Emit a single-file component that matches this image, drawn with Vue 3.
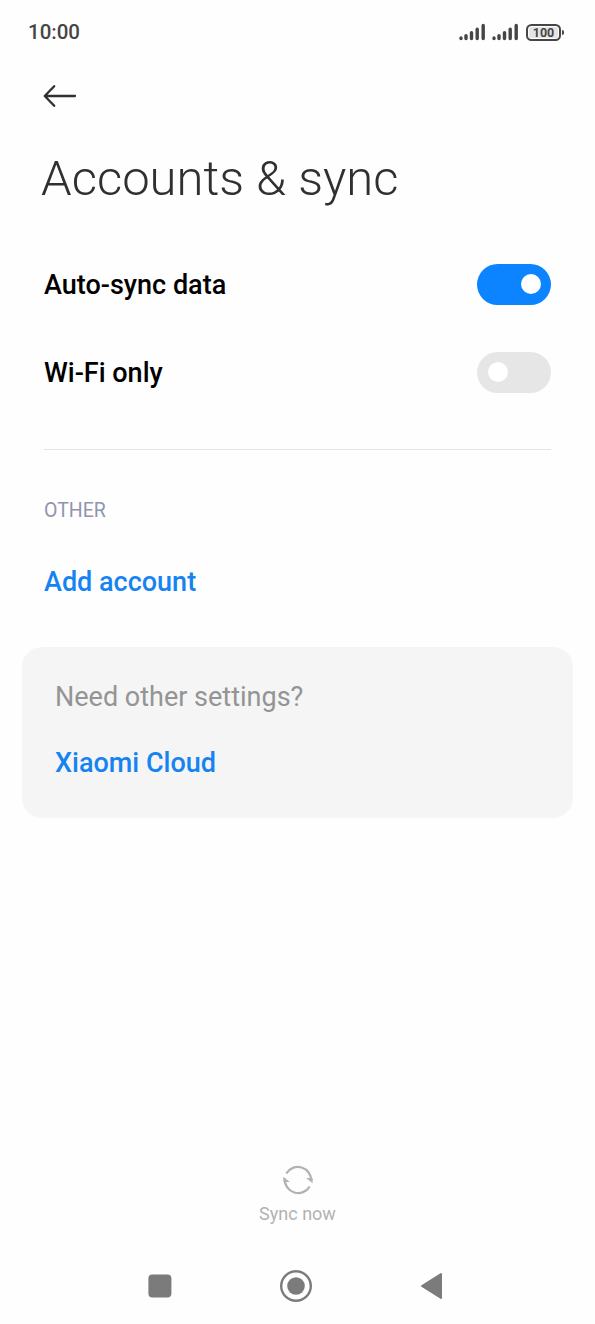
<script setup>
import { ref } from 'vue'

const settings = ref([
  { label: 'Auto-sync data', on: true },
  { label: 'Wi-Fi only', on: false },
])
</script>

<template>
  <div class="screen">
    <header class="status">
      <span class="clock">10:00</span>
      <div class="indicators">
        <svg v-for="n in 2" :key="n" class="signal" width="27" height="18" viewBox="0 0 27 18">
          <path
            d="M2 15.5V14.9M7 15.5V12.6M12.5 15.5V9.6M18.2 15.5V6.2M24.2 15.5V2.4"
            fill="none" stroke="#454545" stroke-width="3.4" stroke-linecap="round"
          />
        </svg>
        <div class="battery"><span class="level">100</span></div>
      </div>
    </header>

    <nav class="toolbar">
      <svg width="34" height="24" viewBox="0 0 34 24">
        <path
          d="M32 12H2M11.2 2.2L1.7 12L11.2 21.8"
          fill="none" stroke="#303030" stroke-width="2.3" stroke-linecap="round" stroke-linejoin="round"
        />
      </svg>
    </nav>

    <h1 class="title">Accounts &amp; sync</h1>

    <main>
      <div v-for="item in settings" :key="item.label" class="row" @click="item.on = !item.on">
        <span class="label">{{ item.label }}</span>
        <span class="toggle" :class="{ on: item.on }"><span class="knob"></span></span>
      </div>
      <div class="divider"></div>
      <div class="section">OTHER</div>
      <div class="add">Add account</div>
      <section class="card">
        <div class="question">Need other settings?</div>
        <div class="cloud">Xiaomi Cloud</div>
      </section>
    </main>

    <div class="sync">
      <svg width="32" height="32" viewBox="0 0 32 32">
        <g fill="none" stroke="#b2b2b2" stroke-width="2.3">
          <path d="M4.3 9.5A13.4 13.4 0 0 1 29.2 17" />
          <path d="M27.7 22.5A13.4 13.4 0 0 1 2.8 15" />
        </g>
        <path d="M24.2 14H30.6V19.2Z" fill="#b2b2b2" />
        <path d="M7.8 18H1.4V12.8Z" fill="#b2b2b2" />
      </svg>
      <span class="sync-label">Sync now</span>
    </div>

    <footer class="navbar">
      <svg width="24" height="24" viewBox="0 0 24 24"><rect x="0.4" y="0.4" width="23" height="23" rx="4" fill="#7b7b7b" /></svg>
      <svg width="34" height="34" viewBox="0 0 34 34">
        <circle cx="17" cy="17" r="14.8" fill="none" stroke="#7b7b7b" stroke-width="2.4" />
        <circle cx="17" cy="17" r="8.8" fill="#7b7b7b" />
      </svg>
      <svg width="23" height="28" viewBox="0 0 23 28">
        <path d="M2 14L21 2V26Z" fill="#7b7b7b" stroke="#7b7b7b" stroke-width="2" stroke-linejoin="round" />
      </svg>
    </footer>
  </div>
</template>

<style>
body {
  background: #fefefe;
}
</style>

<style scoped>
.screen {
  box-sizing: border-box;
  display: flex;
  flex-direction: column;
  height: 1324px;
  font-family: Roboto, "Liberation Sans", sans-serif;
  background: #fefefe;
}
.status {
  display: flex;
  justify-content: space-between;
  align-items: center;
  height: 64px;
  padding: 0 31px 0 28px;
}
.clock {
  font-size: 20.5px;
  font-weight: 500;
  color: #454545;
}
.indicators {
  display: flex;
  align-items: center;
}
.signal {
  margin-right: 6px;
}
.battery {
  position: relative;
  box-sizing: border-box;
  width: 35px;
  height: 17px;
  margin: 0 3px 0 1px;
  border: 2px solid #454545;
  border-radius: 5.5px;
  padding: 1px;
}
.battery::after {
  content: "";
  position: absolute;
  right: -4.5px;
  top: 4px;
  width: 2px;
  height: 5px;
  border-radius: 0 2px 2px 0;
  background: #454545;
}
.level {
  display: block;
  height: 11px;
  border-radius: 2px;
  background: #e4e4e4;
  color: #454545;
  font-size: 12.5px;
  font-weight: 700;
  line-height: 11px;
  text-align: center;
}
.toolbar {
  display: flex;
  align-items: center;
  height: 64px;
  padding-left: 43px;
}
.title {
  height: 100px;
  margin: 0 0 12px;
  padding-left: 41px;
  font-size: 49px;
  font-weight: 300;
  line-height: 101px;
  color: #303030;
}
.row {
  display: flex;
  align-items: center;
  justify-content: space-between;
  height: 88px;
  padding: 0 44px;
}
.label {
  padding-top: 2px;
  font-size: 27px;
  font-weight: 500;
  color: #000;
}
.toggle {
  box-sizing: border-box;
  display: flex;
  width: 74px;
  height: 41px;
  padding: 10.5px;
  border-radius: 21px;
  background: #e6e6e6;
}
.toggle.on {
  justify-content: flex-end;
  background: #0d84ff;
}
.knob {
  width: 20px;
  height: 20px;
  border-radius: 50%;
  background: #fff;
}
.divider {
  height: 1px;
  margin: 33px 44px 0;
  background: #e4e4e4;
}
.section {
  padding: 48px 44px 0;
  font-size: 19.5px;
  line-height: 25px;
  color: #9094ae;
}
.add {
  padding: 42px 44px 0;
  font-size: 27px;
  font-weight: 500;
  line-height: 34px;
  color: #1683f2;
}
.card {
  box-sizing: border-box;
  height: 171px;
  margin: 48px 22px 0;
  padding: 33px;
  border-radius: 20px;
  background: #f5f5f5;
}
.question {
  font-size: 27px;
  line-height: 34px;
  color: #949494;
}
.cloud {
  margin-top: 32px;
  font-size: 27px;
  font-weight: 500;
  line-height: 34px;
  color: #1683f2;
}
.sync {
  display: flex;
  flex-direction: column;
  align-items: center;
  margin-top: auto;
}
.sync-label {
  margin-top: 6px;
  font-size: 18px;
  line-height: 24px;
  color: #b2b2b2;
}
.navbar {
  display: flex;
  align-items: center;
  justify-content: space-between;
  height: 76px;
  margin-top: 22px;
  padding: 0 152px 0 148px;
}
</style>
